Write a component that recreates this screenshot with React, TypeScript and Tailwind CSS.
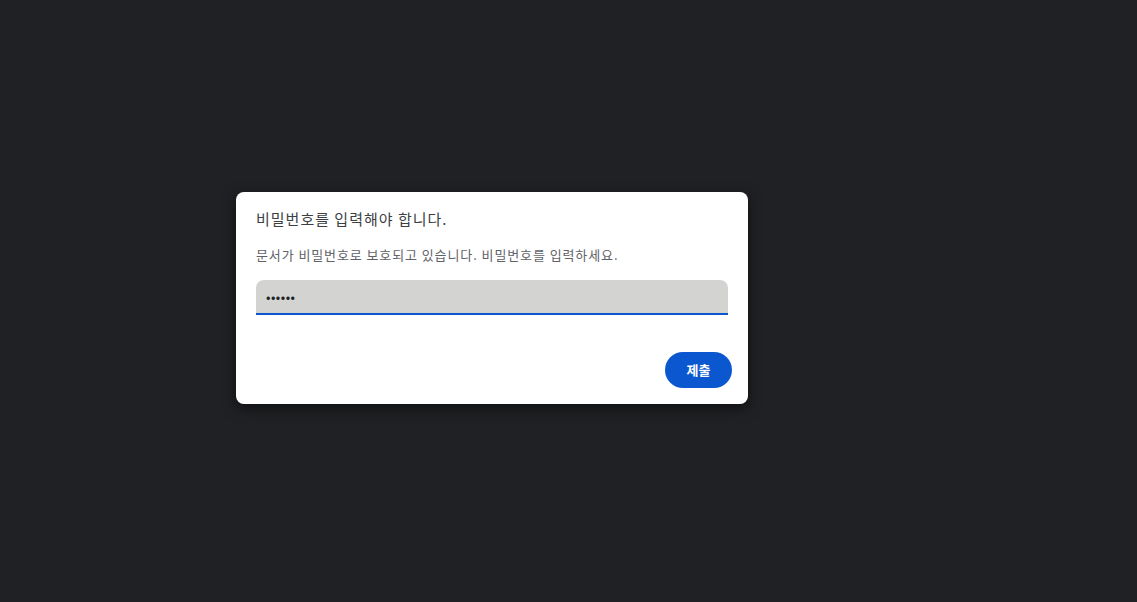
export default function App() {
  return (
    <div
      className="w-[1137px] h-[602px] bg-[#202124] flex items-start pl-[236px] pt-[192px]"
      style={{ fontFamily: '"Noto Sans CJK KR", "Noto Sans", sans-serif' }}
    >
      <div className="w-[512px] h-[212px] bg-white rounded-lg shadow-[0_4px_14px_rgba(0,0,0,0.55)] flex flex-col px-5 pt-[10px] pb-4">
        <h1 className="text-[15px] leading-[20px] text-[#3c4043] tracking-[1px] mt-[7px]">
          비밀번호를 입력해야 합니다.
        </h1>
        <p className="text-[13px] leading-[18px] text-[#5f6368] tracking-[0.9px] mt-[17px]">
          문서가 비밀번호로 보호되고 있습니다. 비밀번호를 입력하세요.
        </p>
        <div className="mt-[16px] h-[35px] bg-[#d3d4d2] rounded-t-lg border-b-2 border-[#0b57d0] flex items-center px-[10px]">
          <input
            type="password"
            defaultValue="aaaaaa"
            className="w-full bg-transparent outline-none text-[13px] text-[#202124] tracking-[0.5px]"
          />
        </div>
        <div className="flex justify-end mt-auto -mr-1">
          <button className="w-[67px] h-[36px] rounded-full bg-[#0b57d0] text-white text-[13px] font-bold">
            제출
          </button>
        </div>
      </div>
    </div>
  );
}
